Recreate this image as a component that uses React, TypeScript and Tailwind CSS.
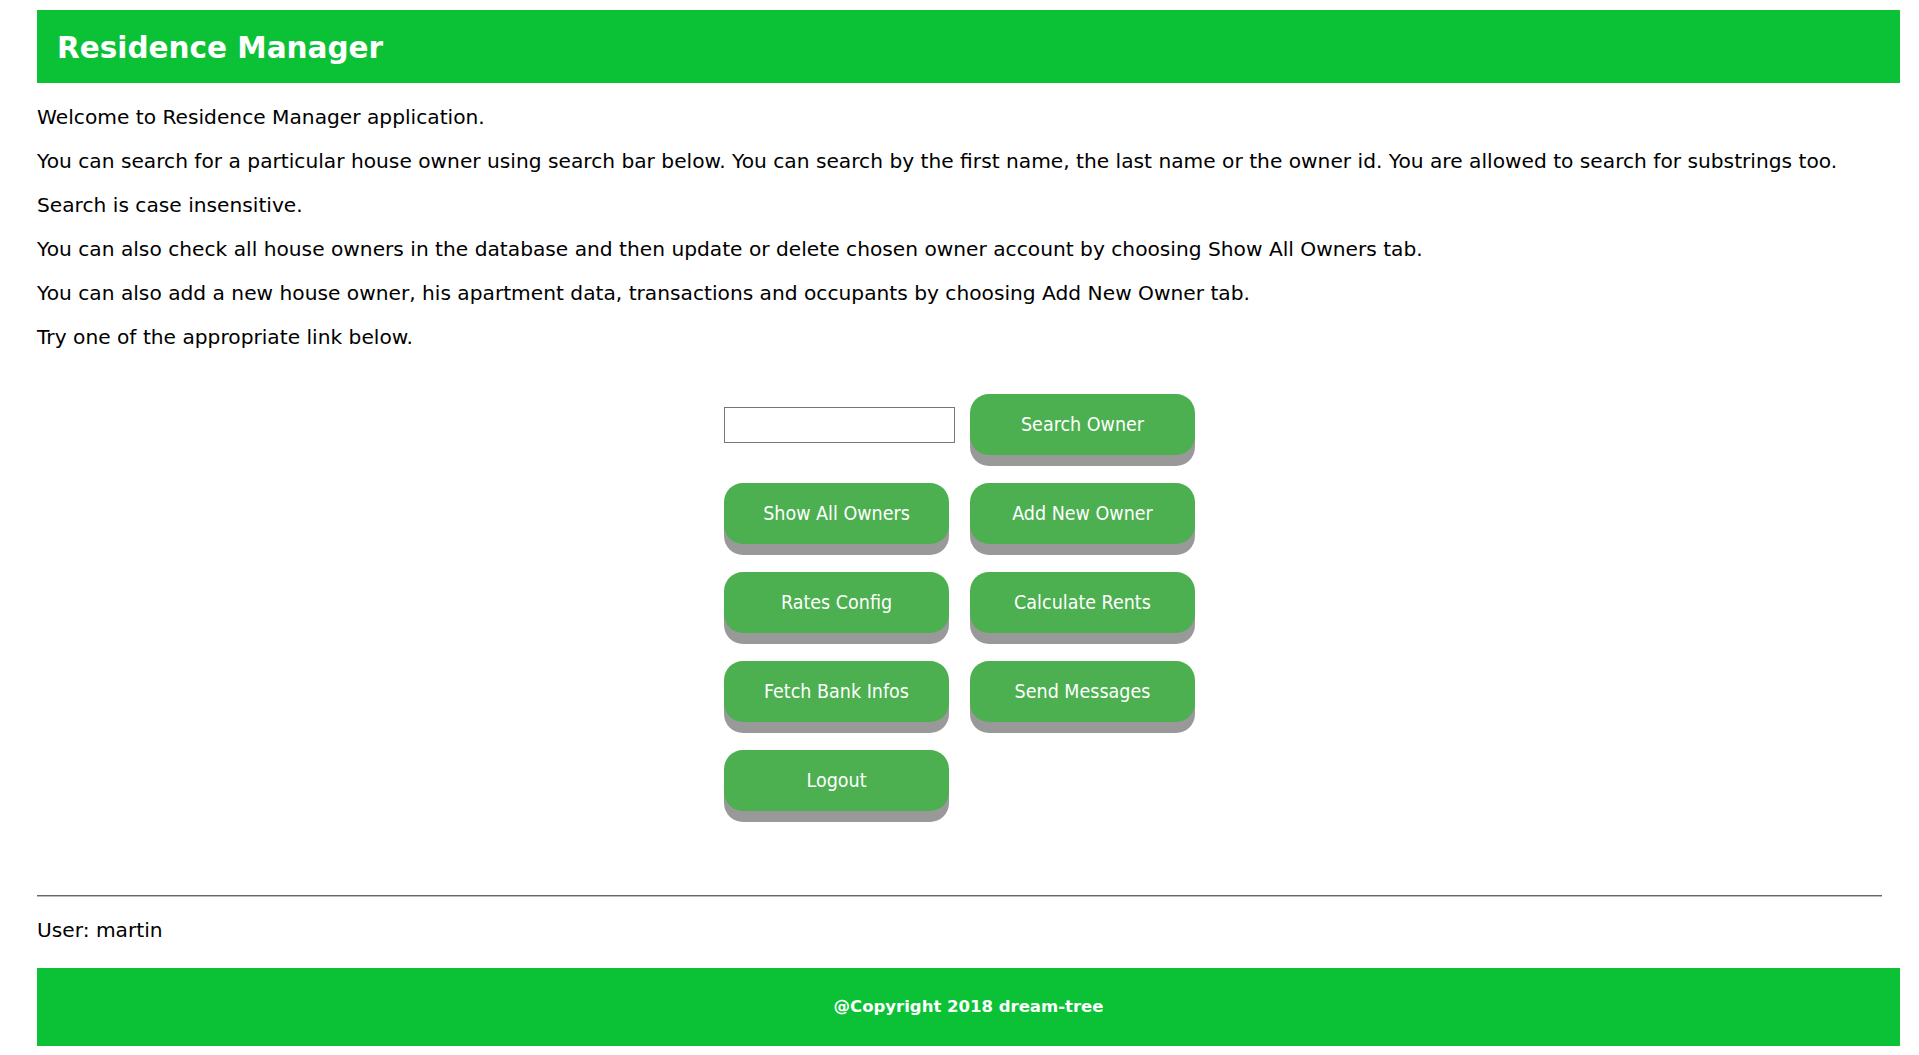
import { useState } from 'react';

const body = { fontFamily: '"DejaVu Sans", Verdana, sans-serif' };
const btnFont = { fontFamily: '"DejaVu Sans Condensed", "Liberation Sans", Tahoma, sans-serif' };

function MenuButton({ label }: { label: string }) {
  return (
    <button
      type="button"
      style={btnFont}
      className="w-[225px] h-[61px] rounded-[19px] bg-[#4caf50] text-white text-[19.5px] shadow-[0_11px_0_#999] cursor-pointer"
    >
      {label}
    </button>
  );
}

export default function App() {
  const [query, setQuery] = useState('');

  return (
    <div style={body} className="min-h-[1055px] bg-white text-black pt-[10px] pl-[37px] pr-[19px]">
      <header className="h-[73px] bg-[#0bc236] flex items-center pl-[20px] pt-[3px]">
        <h1 className="text-white font-bold text-[29.5px]">Residence Manager</h1>
      </header>

      <main className="mr-[18px]">
        <div className="mt-[22px] text-[20.2px] leading-[24px] flex flex-col gap-[20px]">
          <p>Welcome to Residence Manager application.</p>
          <p>
            You can search for a particular house owner using search bar below. You can search by the first name, the
            last name or the owner id. You are allowed to search for substrings too.
          </p>
          <p>Search is case insensitive.</p>
          <p>
            You can also check all house owners in the database and then update or delete chosen owner account by
            choosing Show All Owners tab.
          </p>
          <p>
            You can also add a new house owner, his apartment data, transactions and occupants by choosing Add New
            Owner tab.
          </p>
          <p>Try one of the appropriate link below.</p>
        </div>

        <div className="mt-[45px] w-[471px] mx-auto flex flex-col gap-[28px]">
          <div className="flex items-center justify-between">
            <input
              type="text"
              value={query}
              onChange={(e) => setQuery(e.target.value)}
              className="w-[231px] h-[36px] border border-[#767676] px-2 text-[16px] outline-none"
            />
            <MenuButton label="Search Owner" />
          </div>
          <div className="flex justify-between">
            <MenuButton label="Show All Owners" />
            <MenuButton label="Add New Owner" />
          </div>
          <div className="flex justify-between">
            <MenuButton label="Rates Config" />
            <MenuButton label="Calculate Rents" />
          </div>
          <div className="flex justify-between">
            <MenuButton label="Fetch Bank Infos" />
            <MenuButton label="Send Messages" />
          </div>
          <div className="flex">
            <MenuButton label="Logout" />
          </div>
        </div>

        <hr className="mt-[84px] border-t border-t-[#666] border-b border-b-[#bbb]" />

        <p className="mt-[21px] text-[20.2px] leading-[24px]">User: martin</p>
      </main>

      <footer className="mt-[26px] h-[78px] bg-[#0bc236] flex items-center justify-center">
        <span className="text-white font-bold text-[16.5px]">@Copyright 2018 dream-tree</span>
      </footer>
    </div>
  );
}
